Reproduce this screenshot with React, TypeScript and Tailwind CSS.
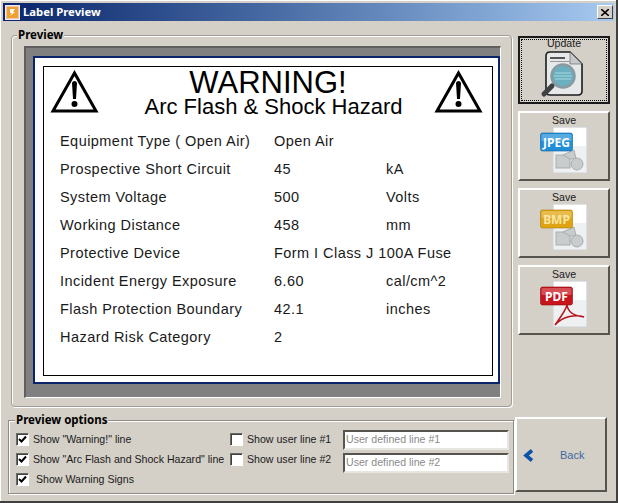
import React from 'react'

const rows = [
  ['Equipment Type ( Open Air)', 'Open Air', ''],
  ['Prospective Short Circuit', '45', 'kA'],
  ['System Voltage', '500', 'Volts'],
  ['Working Distance', '458', 'mm'],
  ['Protective Device', 'Form I Class J 100A Fuse', ''],
  ['Incident Energy Exposure', '6.60', 'cal/cm^2'],
  ['Flash Protection Boundary', '42.1', 'inches'],
  ['Hazard Risk Category', '2', ''],
]

function WarningSign() {
  return (
    <svg width="49" height="44" viewBox="0 0 49 44">
      <path d="M24.5 3 L46 41 H3 Z" fill="none" stroke="#000" strokeWidth="3" strokeLinejoin="miter" />
      <path d="M22 13 a2.6 2.6 0 0 1 5 0 L26 29 h-3 Z" fill="#000" />
      <circle cx="24.5" cy="34" r="3" fill="#000" />
    </svg>
  )
}

function FileIcon({ label, color, dark, textColor = '#ffffff' }: { label: string; color: string; dark: string; textColor?: string }) {
  return (
    <svg width="48" height="49" viewBox="0 0 48 49">
      <rect x="13" y="1" width="34" height="46" rx="1" fill="#eef0f2" stroke="#cfd2d4" />
      <rect x="14" y="2" width="32" height="18" fill="#ffffff" />
      {label === 'PDF' ? (
        <path
          d="M15 45 C19 39 25 32 27 25 C28 32 34 36 44 37 C36 34 23 36 15 45 Z"
          fill="none"
          stroke="#b8141c"
          strokeWidth="1.5"
        />
      ) : (
        <>
          <rect x="16" y="29" width="14" height="13" fill="#c8cccd" stroke="#a8adb0" />
          <path d="M23 29 L34 24 L36 33 L30 33 Z" fill="#c8cccd" stroke="#a8adb0" />
          <circle cx="37" cy="38" r="6" fill="#c8cccd" stroke="#a8adb0" />
        </>
      )}
      <rect x="0.5" y="7" width="32" height="18" rx="2" fill={color} stroke={dark} strokeWidth="0.6" />
      <rect x="1.5" y="8" width="30" height="7" rx="1.5" fill="#ffffff" opacity="0.25" />
      <text
        x="16.5"
        y="21"
        textAnchor="middle"
        fontSize="12"
        fontWeight="700"
        fill={textColor}
        fontFamily="'Noto Sans', sans-serif"
      >
        {label}
      </text>
    </svg>
  )
}

function PreviewIcon() {
  return (
    <svg width="48" height="50" viewBox="0 0 48 50">
      <path d="M10 3 H30 L42 15 V42 Q42 46 38 46 H10 Q6 46 6 42 V7 Q6 3 10 3 Z" fill="#e6e8ea" stroke="#1c1c1c" strokeWidth="1.6" />
      <path d="M30 3 V15 H42 Z" fill="#c7cacc" stroke="#555" strokeWidth="0.6" />
      <rect x="10" y="8" width="15" height="2" fill="#555" />
      <rect x="10" y="12" width="20" height="1" fill="#999" />
      <circle cx="23" cy="27" r="11.5" fill="#6bb0bf" stroke="#8a9aa0" strokeWidth="2.5" />
      <path d="M15 24 H31 M14 27 H32 M15 30 H31" stroke="#a8dae3" strokeWidth="1" />
      <path d="M12 37 L4 45" stroke="#3f4244" strokeWidth="5" strokeLinecap="round" />
    </svg>
  )
}

function CheckBox({ checked }: { checked: boolean }) {
  return (
    <span className="w-[13px] h-[13px] shrink-0 bg-white border-t border-l border-t-[#6b6b66] border-l-[#6b6b66] border-r border-b border-r-[#fff] border-b-[#fff] shadow-[inset_1px_1px_0_#404040] flex items-center justify-center">
      {checked && (
        <svg width="9" height="9" viewBox="0 0 9 9">
          <path d="M1 4 L3.5 6.5 L8 1.5" fill="none" stroke="#000" strokeWidth="2" />
        </svg>
      )}
    </span>
  )
}

function Option({ text, checked, gap = 'gap-[4px]' }: { text: string; checked: boolean; gap?: string }) {
  return (
    <label className={`flex items-center ${gap} h-[13px] whitespace-nowrap`}>
      <CheckBox checked={checked} />
      <span>{text}</span>
    </label>
  )
}

function UserInput({ text }: { text: string }) {
  return (
    <div className="w-[166px] h-[20px] bg-white border-2 border-t-[#55544f] border-l-[#55544f] border-r-[#e8e6e0] border-b-[#e8e6e0] text-[#8a8a8a] leading-[15px] pl-[1px] whitespace-nowrap">
      {text}
    </div>
  )
}

function SaveButton({ children }: { children: React.ReactNode }) {
  return (
    <button className="w-[92px] h-[70px] flex flex-col items-center border-2 border-t-[#fff] border-l-[#fff] border-r-[#55544f] border-b-[#55544f] bg-[#d4d0c8]">
      <span className="leading-[14px] h-[13px]">Save</span>
      {children}
    </button>
  )
}

export default function App() {
  return (
    <div
      className="w-[618px] h-[503px] bg-[#d4d0c8] overflow-hidden flex flex-col text-[#1a1a1a] text-[10.6px] pt-[3px] pl-[3px] border-r-2 border-b-2 border-r-[#404040] border-b-[#404040] shadow-[inset_1px_1px_0_#fff]"
      style={{ fontFamily: "'Liberation Sans', sans-serif" }}
    >
      {/* Title bar */}
      <div className="w-[611px] h-[18px] shrink-0 flex items-center bg-gradient-to-r from-[#0a246a] to-[#a6caf0]">
        <span className="ml-[2px] w-[15px] h-[15px] bg-[#e9c9a0] border border-[#f4e6f4] flex items-center justify-center">
          <svg width="11" height="11" viewBox="0 0 11 11">
            <rect width="11" height="11" fill="#f0a030" />
            <path d="M3 2 H8 L6 5 H8 L3 9 L5 6 H3 Z" fill="#fff" />
          </svg>
        </span>
        <span className="ml-[3px] text-white font-bold text-[11.3px] leading-none" style={{ fontFamily: "'Noto Sans', sans-serif" }}>Label Preview</span>
        <span className="ml-auto mr-[1px] w-[16px] h-[14px] bg-[#d4d0c8] border border-t-white border-l-white border-r-[#404040] border-b-[#404040] flex items-center justify-center">
          <svg width="8" height="7" viewBox="0 0 8 7">
            <path d="M0 0 L8 7 M8 0 L0 7" stroke="#000" strokeWidth="1.6" />
          </svg>
        </span>
      </div>

      {/* Preview + buttons */}
      <div className="flex mt-[14px] ml-[8px]">
        <div className="relative w-[501px] h-[372px] border border-[#a09d95] rounded-[4px] shadow-[inset_1px_1px_0_#fff,1px_1px_0_#fff] pt-[10px] pl-[12px]">
          <span className="absolute -top-[8px] left-[5px] px-[1px] bg-[#d4d0c8] font-bold text-[11.5px] leading-[14px] text-black" style={{ fontFamily: "'Noto Sans', sans-serif" }}>Preview</span>
          <div className="w-[477px] h-[352px] bg-[#808080] border-t-2 border-l-2 border-t-[#5f5f5f] border-l-[#5f5f5f] border-r border-b border-r-white border-b-white pt-[8px] pl-[7px]">
            <div className="w-[467px] h-[328px] bg-white border-2 border-[#0a246a] pt-[8px] pl-[8px]">
              <div className="w-[450px] h-[310px] border border-black text-black">
                <div className="flex justify-between pl-[6px] pr-[9px] pt-[3px] h-[61px]">
                  <WarningSign />
                  <div className="flex flex-col items-center ml-[3px]">
                    <span className="text-[31px] leading-[25px]">WARNING!</span>
                    <span className="text-[22px] leading-[23px] ml-[11px] whitespace-nowrap">Arc Flash &amp; Shock Hazard</span>
                  </div>
                  <WarningSign />
                </div>
                <div className="grid grid-cols-[214px_112px_1fr] ml-[16px] text-[14.5px] text-[#1a1a1a] tracking-[0.45px] auto-rows-[28px] items-center">
                  {rows.map((r) => (
                    <React.Fragment key={r[0]}>
                      <span className="whitespace-nowrap">{r[0]}</span>
                      <span className="whitespace-nowrap">{r[1]}</span>
                      <span className="whitespace-nowrap">{r[2]}</span>
                    </React.Fragment>
                  ))}
                </div>
              </div>
            </div>
          </div>
        </div>

        <div className="flex flex-col gap-[7px] ml-[6px] mt-[1px]">
          <button className="w-[92px] h-[68px] border-2 border-[#1a1a1a] bg-[#d4d0c8] p-[1px]">
            <div className="w-full h-full border border-dotted border-black flex flex-col items-center">
              <span className="leading-[14px] h-[13px] -mt-[4px]">Update</span>
              <PreviewIcon />
            </div>
          </button>
          <SaveButton>
            <FileIcon label="JPEG" color="#1f8fd8" dark="#0f5f9f" />
          </SaveButton>
          <SaveButton>
            <FileIcon label="BMP" color="#e0a412" dark="#a87808" textColor="#f8e6a8" />
          </SaveButton>
          <SaveButton>
            <FileIcon label="PDF" color="#c8141c" dark="#8c0c12" />
          </SaveButton>
        </div>
      </div>

      {/* Options + back */}
      <div className="flex ml-[5px] mt-[10px]">
        <div className="relative w-[506px] h-[74px] mt-[3px] border border-[#8f8c85] shadow-[1px_1px_0_#fff,inset_1px_1px_0_#fff] flex pl-[7px] pt-[12px]">
          <span className="absolute -top-[8px] left-[6px] px-[1px] bg-[#d4d0c8] font-bold text-[11.5px] leading-[14px] text-black" style={{ fontFamily: "'Noto Sans', sans-serif" }}>Preview options</span>
          <div className="flex flex-col gap-[7px] w-[214px]">
            <Option text={'Show "Warning!" line'} checked />
            <Option text={'Show "Arc Flash and Shock Hazard" line'} checked />
            <Option text="Show Warning Signs" checked gap="gap-[7px]" />
          </div>
          <div className="flex flex-col gap-[7px] w-[113px]">
            <Option text="Show user line #1" checked={false} />
            <Option text="Show user line #2" checked={false} />
          </div>
          <div className="flex flex-col gap-[3px] -mt-[3px]">
            <UserInput text="User defined line #1" />
            <UserInput text="User defined line #2" />
          </div>
        </div>
        <button className="w-[92px] h-[75px] border-2 border-t-[#fff] border-l-[#fff] border-r-[#55544f] border-b-[#55544f] bg-[#d4d0c8] flex items-center pl-[5px] pt-[2px] ml-[1px]">
          <svg width="12" height="13" viewBox="0 0 12 13">
            <path d="M10 1.5 L4 6.5 L10 11.5" fill="none" stroke="#0b52a8" strokeWidth="3.6" />
          </svg>
          <span className="ml-[26px] text-[#3d6a9c] text-[11px]">Back</span>
        </button>
      </div>
    </div>
  )
}
